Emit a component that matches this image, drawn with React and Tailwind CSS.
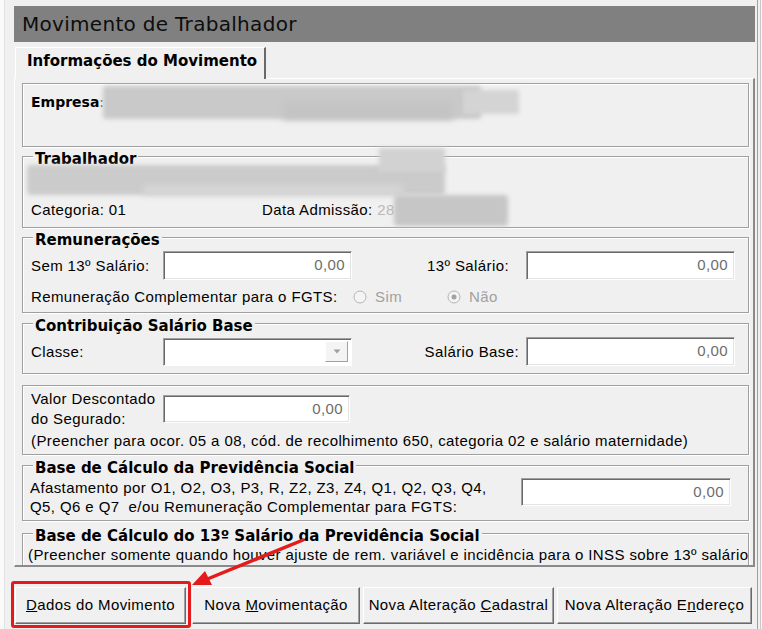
import React from "react";

const Group = ({ title, className = "", children }) => (
  <div
    className={`relative shrink-0 border border-[#a0a0a0] shadow-[inset_1px_1px_0_#ffffff,1px_1px_0_#ffffff] ${className}`}
  >
    {title && (
      <div className="absolute left-[10px] -top-[7px] px-[2px] bg-[#f0f0f0] font-['DejaVu_Sans',sans-serif] font-bold text-[15px] leading-[18px] text-black whitespace-nowrap">
        {title}
      </div>
    )}
    {children}
  </div>
);

const Field = ({ className = "", value = "0,00" }) => (
  <div
    className={`shrink-0 bg-white border border-t-[#a0a0a0] border-l-[#a0a0a0] border-r-white border-b-white shadow-[inset_1px_1px_0_#696969,inset_-1px_-1px_0_#e3e3e3] flex items-center justify-end pr-[6px] font-['Liberation_Sans',Arial,sans-serif] text-[15px] tracking-[0.4px] text-[#6d6d6d] ${className}`}
  >
    {value}
  </div>
);

const Radio = ({ checked }) => (
  <svg width="14" height="14" viewBox="0 0 14 14" className="shrink-0">
    <circle cx="7" cy="7" r="6" fill="#f4f4f4" stroke="#b5b5b5" strokeWidth="1" />
    {checked && <circle cx="7" cy="7" r="2.5" fill="#a3a3a3" />}
  </svg>
);

const Btn = ({ className = "", children }) => (
  <div
    className={`shrink-0 h-[37px] flex items-center justify-center bg-[#f0f0f0] border border-t-white border-l-white border-r-[#696969] border-b-[#696969] shadow-[inset_-1px_-1px_0_#a0a0a0] font-['Liberation_Sans',Arial,sans-serif] text-[15px] tracking-[0.4px] text-black whitespace-nowrap ${className}`}
  >
    <span>{children}</span>
  </div>
);

export default function App() {
  const txt = "font-['Liberation_Sans',Arial,sans-serif] text-[15px] tracking-[0.4px] leading-[18px] text-black whitespace-nowrap";
  return (
    <div className="relative w-[762px] h-[629px] overflow-hidden bg-[#f0f0f0] flex">
      {/* left frame strip */}
      <div className="w-[5px] shrink-0 bg-[#fafafa] border-r border-[#e2e2e2]" />

      {/* main */}
      <div className="w-[752px] shrink-0 pl-[9px] pt-[6px] flex flex-col">
        {/* title bar */}
        <div className="w-[741px] h-[36px] bg-[#808080] flex items-center pl-[8px] font-['DejaVu_Sans',sans-serif] text-[20px] tracking-[0.3px] text-[#0d0d0d]">
          Movimento de Trabalhador
        </div>

        {/* tab row */}
        <div className="flex mt-[5px] h-[31px] relative z-10">
          <div className="ml-[1px] w-[251px] h-[32px] bg-[#f0f0f0] border-t border-l border-white border-r-2 border-r-[#696969] pl-[11px] pt-[4px] font-['DejaVu_Sans',sans-serif] font-bold text-[15px] leading-[18px] text-black">
            Informações do Movimento
          </div>
        </div>

        {/* tab panel */}
        <div className="w-[741px] h-[489px] overflow-hidden border-t border-l border-white border-r-2 border-b-2 border-r-[#8a8a8a] border-b-[#8a8a8a] pl-[7px] pt-[4px] flex flex-col">
          {/* Empresa */}
          <Group className="w-[727px] h-[64px]">
            <div className="pl-[8px] pt-[9px] font-['DejaVu_Sans',sans-serif] font-bold text-[14px] leading-[18px] text-black">
              Empresa<span className="font-normal text-[#555]">:</span>
            </div>
            <div className="absolute left-[80px] top-[2px] w-[378px] h-[33px] bg-[#c9c9c9] blur-[2px] rounded-[3px]" />
            <div className="absolute left-[440px] top-[6px] w-[56px] h-[24px] bg-[#d4d4d4] blur-[2px]" />
            <div className="absolute left-[260px] top-[18px] w-[170px] h-[18px] bg-[#c4c4c4] blur-[3px]" />
          </Group>

          {/* Trabalhador */}
          <Group title="Trabalhador" className="w-[727px] h-[72px] mt-[9px]">
            <div className="absolute left-[4px] top-[8px] w-[418px] h-[30px] bg-[#cbcbcb] blur-[2px] rounded-[4px]" />
            <div className="absolute left-[356px] -top-[9px] w-[66px] h-[24px] bg-[#d2d2d2] blur-[2px]" />
            <div className="absolute left-[120px] top-[28px] w-[260px] h-[10px] bg-[#d6d6d6] blur-[3px]" />
            <div className="relative pl-[8px] pt-[44px] flex">
              <span className={`${txt} w-[231px]`}>Categoria: 01</span>
              <span className={txt}>
                Data Admissão: <span className="text-[#b9b9b9]">28</span>
              </span>
            </div>
            <div className="absolute left-[371px] top-[38px] w-[114px] h-[31px] bg-[#c6c6c6] blur-[2px] rounded-[4px]" />
          </Group>

          {/* Remunerações */}
          <Group title="Remunerações" className="w-[727px] h-[76px] mt-[9px]">
            <div className="pl-[8px] pt-[13px] flex items-center">
              <span className={`${txt} w-[132px]`}>Sem 13º Salário:</span>
              <Field className="w-[189px] h-[29px]" />
              <span className={`${txt} w-[157px] text-right`}>13º Salário:</span>
              <Field className="w-[209px] h-[29px] ml-[17px]" />
            </div>
            <div className="pl-[8px] mt-[8px] flex items-center">
              <span className={`${txt} w-[322px]`}>Remuneração Complementar para o FGTS:</span>
              <Radio />
              <span className={`${txt} !text-[#a0a0a0] ml-[8px] w-[72px]`}>Sim</span>
              <Radio checked />
              <span className={`${txt} !text-[#a0a0a0] ml-[8px]`}>Não</span>
            </div>
          </Group>

          {/* Contribuição Salário Base */}
          <Group title="Contribuição Salário Base" className="w-[727px] h-[51px] mt-[10px]">
            <div className="pl-[8px] pt-[13px] flex items-center">
              <span className={`${txt} w-[132px]`}>Classe:</span>
              <div className="w-[189px] h-[28px] bg-white border border-t-[#a0a0a0] border-l-[#a0a0a0] border-r-white border-b-white shadow-[inset_1px_1px_0_#696969] flex justify-end items-center pr-[3px]">
                <div className="w-[23px] h-[21px] bg-[#f4f4f4] border border-t-white border-l-white border-r-[#a0a0a0] border-b-[#a0a0a0] flex items-center justify-center">
                  <svg width="8" height="5" viewBox="0 0 8 5">
                    <path d="M0.5 0.5 L7.5 0.5 L4 4.5 Z" fill="#a0a0a0" />
                  </svg>
                </div>
              </div>
              <span className={`${txt} w-[167px] text-right`}>Salário Base:</span>
              <Field className="w-[209px] h-[29px] ml-[7px]" />
            </div>
          </Group>

          {/* Valor Descontado */}
          <Group className="w-[727px] h-[70px] mt-[11px]">
            <div className="pl-[8px] flex items-start">
              <div className={`${txt} w-[132px] mt-[3px] !leading-[20px]`}>
                Valor Descontado
                <br />
                do Segurado:
              </div>
              <Field className="w-[187px] h-[28px] mt-[9px]" />
            </div>
            <div className={`${txt} pl-[8px] mt-[3px]`}>
              (Preencher para ocor. 05 a 08, cód. de recolhimento 650, categoria 02 e salário maternidade)
            </div>
          </Group>

          {/* Base de Cálculo da Previdência Social */}
          <Group title="Base de Cálculo da Previdência Social" className="w-[727px] h-[56px] mt-[10px]">
            <div className="pl-[7px] flex items-start">
              <div className={`${txt} w-[491px] mt-[12px] !leading-[19px]`}>
                Afastamento por O1, O2, O3, P3, R, Z2, Z3, Z4, Q1, Q2, Q3, Q4,
                <br />
                Q5, Q6 e Q7&nbsp; e/ou Remuneração Complementar para FGTS:
              </div>
              <Field className="w-[210px] h-[28px] mt-[12px]" />
            </div>
          </Group>

          {/* Base de Cálculo do 13º Salário */}
          <Group title="Base de Cálculo do 13º Salário da Previdência Social" className="w-[727px] h-[80px] mt-[12px]">
            <div className={`${txt} pl-[5px] mt-[12px]`}>
              (Preencher somente quando houver ajuste de rem. variável e incidência para o INSS sobre 13º salário
            </div>
          </Group>
        </div>

        {/* buttons */}
        <div className="flex mt-[20px]">
          <Btn className="ml-[1px] w-[171px]">
            <span className="underline">D</span>ados do Movimento
          </Btn>
          <Btn className="ml-[6px] w-[168px]">
            Nova <span className="underline">M</span>ovimentação
          </Btn>
          <Btn className="ml-[3px] w-[191px]">
            Nova Alteração <span className="underline">C</span>adastral
          </Btn>
          <Btn className="ml-[3px] w-[195px]">
            Nova Alteração E<span className="underline">n</span>dereço
          </Btn>
        </div>
      </div>

      {/* right frame */}
      <div className="w-[5px] shrink-0 flex">
        <div className="w-[1px] bg-[#a0a0a0]" />
        <div className="w-[2px] bg-[#f0f0f0]" />
        <div className="w-[1px] bg-[#c8c8c8]" />
        <div className="w-[1px] bg-[#f7f7f7]" />
      </div>

      {/* annotation: red highlight box */}
      <div className="absolute left-[11px] top-[581px] w-[180px] h-[47px] border-[3px] border-[#e31b1b] rounded-[3px] pointer-events-none" />

      {/* annotation: red arrow */}
      <svg className="absolute left-0 top-0 pointer-events-none" width="762" height="629" viewBox="0 0 762 629">
        <line x1="303" y1="540" x2="205" y2="580" stroke="#e31b1b" strokeWidth="3.5" strokeLinecap="round" />
        <polygon points="192,585 212,585 205,571" fill="#e31b1b" />
      </svg>
    </div>
  );
}
